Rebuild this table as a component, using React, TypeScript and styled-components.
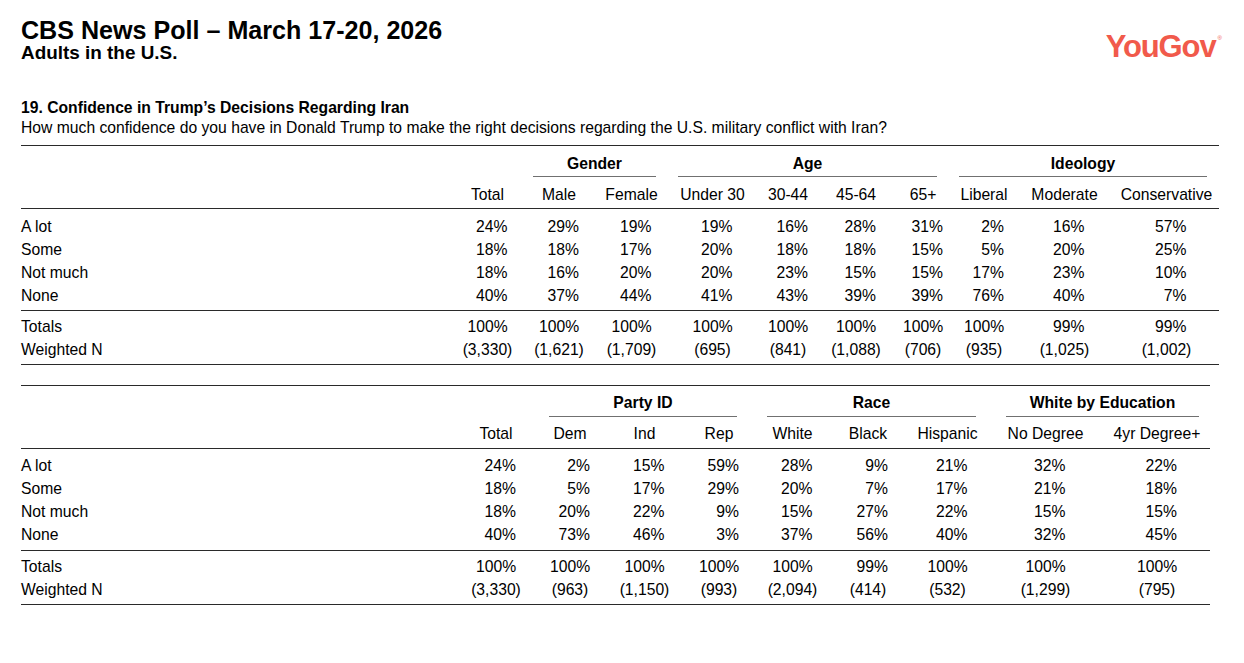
import React from 'react'
import styled, { createGlobalStyle } from 'styled-components'

const GlobalStyle = createGlobalStyle`
  html, body {
    margin: 0;
    padding: 0;
    background: #fff;
  }
  body {
    font-family: "Liberation Sans", Arial, Helvetica, sans-serif;
    color: #000;
  }
`

type Group = { label: string; span: number; ml: number; mr: number }
type Line = { label: string; values: string[] }

type TableData = {
  cols: number[]
  groups: Group[]
  headers: string[]
  body: Line[]
  totals: Line[]
}

const table1: TableData = {
  cols: [431, 71, 72, 73, 89, 62, 74, 60, 62, 99, 105],
  groups: [
    { label: 'Gender', span: 2, ml: 10, mr: 12 },
    { label: 'Age', span: 4, ml: 10, mr: 16 },
    { label: 'Ideology', span: 3, ml: 6, mr: 12 },
  ],
  headers: ['Total', 'Male', 'Female', 'Under 30', '30-44', '45-64', '65+', 'Liberal', 'Moderate', 'Conservative'],
  body: [
    { label: 'A lot', values: ['24%', '29%', '19%', '19%', '16%', '28%', '31%', '2%', '16%', '57%'] },
    { label: 'Some', values: ['18%', '18%', '17%', '20%', '18%', '18%', '15%', '5%', '20%', '25%'] },
    { label: 'Not much', values: ['18%', '16%', '20%', '20%', '23%', '15%', '15%', '17%', '23%', '10%'] },
    { label: 'None', values: ['40%', '37%', '44%', '41%', '43%', '39%', '39%', '76%', '40%', '7%'] },
  ],
  totals: [
    { label: 'Totals', values: ['100%', '100%', '100%', '100%', '100%', '100%', '100%', '100%', '99%', '99%'] },
    { label: 'Weighted N', values: ['(3,330)', '(1,621)', '(1,709)', '(695)', '(841)', '(1,088)', '(706)', '(935)', '(1,025)', '(1,002)'] },
  ],
}

const table2: TableData = {
  cols: [439, 72, 76, 73, 76, 71, 80, 79, 117, 106],
  groups: [
    { label: 'Party ID', span: 3, ml: 17, mr: 20 },
    { label: 'Race', span: 3, ml: 10, mr: 11 },
    { label: 'White by Education', span: 2, ml: 19, mr: 11 },
  ],
  headers: ['Total', 'Dem', 'Ind', 'Rep', 'White', 'Black', 'Hispanic', 'No Degree', '4yr Degree+'],
  body: [
    { label: 'A lot', values: ['24%', '2%', '15%', '59%', '28%', '9%', '21%', '32%', '22%'] },
    { label: 'Some', values: ['18%', '5%', '17%', '29%', '20%', '7%', '17%', '21%', '18%'] },
    { label: 'Not much', values: ['18%', '20%', '22%', '9%', '15%', '27%', '22%', '15%', '15%'] },
    { label: 'None', values: ['40%', '73%', '46%', '3%', '37%', '56%', '40%', '32%', '45%'] },
  ],
  totals: [
    { label: 'Totals', values: ['100%', '100%', '100%', '100%', '100%', '99%', '100%', '100%', '100%'] },
    { label: 'Weighted N', values: ['(3,330)', '(963)', '(1,150)', '(993)', '(2,094)', '(414)', '(532)', '(1,299)', '(795)'] },
  ],
}

function CrossTab({ data }: { data: TableData }) {
  const tpl = data.cols.map((c) => `${c}px`).join(' ')
  const width = data.cols.reduce((a, b) => a + b, 0)

  return (
    <Table $width={width}>
      <Rule />
      <Row $cols={tpl}>
        <Blank $span={2} />
        {data.groups.map((g) => (
          <GroupCell key={g.label} $span={g.span} $ml={g.ml} $mr={g.mr}>
            {g.label}
          </GroupCell>
        ))}
      </Row>
      <HeadRow $cols={tpl}>
        <Blank $span={1} />
        {data.headers.map((h) => (
          <HeadCell key={h}>{h}</HeadCell>
        ))}
      </HeadRow>
      <Rule />
      <Body $top={5.5} $bottom={3.5}>
        {data.body.map((line) => (
          <DataLine key={line.label} cols={tpl} line={line} />
        ))}
      </Body>
      <Rule />
      <Body $top={4} $bottom={3}>
        {data.totals.map((line) => (
          <DataLine key={line.label} cols={tpl} line={line} />
        ))}
      </Body>
      <Rule />
    </Table>
  )
}

function DataLine({ cols, line }: { cols: string; line: Line }) {
  return (
    <Row $cols={cols}>
      <Label>{line.label}</Label>
      {line.values.map((v, i) => (
        <NumCell key={i}>
          {v.startsWith('(') ? v : <Pct>{v}</Pct>}
        </NumCell>
      ))}
    </Row>
  )
}

export default function App() {
  return (
    <>
      <GlobalStyle />
      <Page>
        <Header>
          <TitleBlock>
            <Title>CBS News Poll – March 17-20, 2026</Title>
            <Subtitle>Adults in the U.S.</Subtitle>
          </TitleBlock>
          <Logo>
            YouGov<Reg>®</Reg>
          </Logo>
        </Header>
        <Question>
          <QTitle>19. Confidence in Trump’s Decisions Regarding Iran</QTitle>
          <QText>
            How much confidence do you have in Donald Trump to make the right decisions regarding the U.S. military
            conflict with Iran?
          </QText>
        </Question>
        <CrossTab data={table1} />
        <Spacer />
        <CrossTab data={table2} />
      </Page>
    </>
  )
}

const Page = styled.div`
  padding: 16.5px 22px 0 21px;
`

const Header = styled.div`
  display: flex;
  justify-content: space-between;
  align-items: flex-start;
`

const TitleBlock = styled.div`
  display: flex;
  flex-direction: column;
`

const Title = styled.div`
  font-size: 25.1px;
  line-height: 26px;
  font-weight: bold;
`

const Subtitle = styled.div`
  font-size: 18.9px;
  line-height: 19px;
  font-weight: bold;
`

const Logo = styled.div`
  margin-top: 14.5px;
  display: flex;
  align-items: flex-start;
  color: #f15a4b;
  font-size: 31px;
  line-height: 31px;
  font-weight: bold;
  letter-spacing: -1.1px;
`

const Reg = styled.span`
  font-size: 6px;
  line-height: 6px;
  font-weight: normal;
  letter-spacing: 0;
  margin: 4px 0 0 2px;
`

const Question = styled.div`
  margin-top: 36px;
  font-size: 15.7px;
  line-height: 20px;
`

const QTitle = styled.div`
  font-weight: bold;
`

const QText = styled.div``

const Table = styled.div<{ $width: number }>`
  width: ${(p) => p.$width}px;
  margin-top: 7px;
  font-size: 15.7px;
  line-height: 23px;
`

const Spacer = styled.div`
  height: 12.5px;
`

const Rule = styled.div`
  height: 0;
  border-top: 1px solid #2a2a2a;
`

const Row = styled.div<{ $cols: string }>`
  display: grid;
  grid-template-columns: ${(p) => p.$cols};
`

const HeadRow = styled(Row)`
  margin-top: 5.5px;
  margin-bottom: 2.5px;
`

const Blank = styled.div<{ $span: number }>`
  grid-column: span ${(p) => p.$span};
`

const GroupCell = styled.div<{ $span: number; $ml: number; $mr: number }>`
  grid-column: span ${(p) => p.$span};
  margin: 5.5px ${(p) => p.$mr}px 0 ${(p) => p.$ml}px;
  padding-bottom: 1.5px;
  border-bottom: 1px solid #707070;
  text-align: center;
  font-weight: bold;
`

const HeadCell = styled.div`
  text-align: center;
  white-space: nowrap;
`

const Body = styled.div<{ $top: number; $bottom: number }>`
  padding: ${(p) => p.$top}px 0 ${(p) => p.$bottom}px;
`

const Label = styled.div`
  white-space: nowrap;
`

const NumCell = styled.div`
  text-align: center;
  white-space: nowrap;
`

const Pct = styled.span`
  display: inline-block;
  width: 40px;
  text-align: right;
`
